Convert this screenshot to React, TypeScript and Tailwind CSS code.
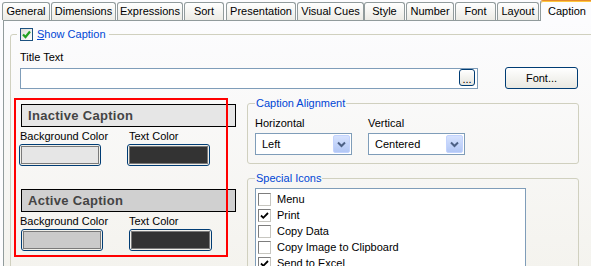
import React from 'react';

const tabs = [
  { label: 'General', cls: 'ml-[2px] w-[48px]' },
  { label: 'Dimensions', cls: 'ml-[1px] w-[65px]' },
  { label: 'Expressions', cls: 'ml-[1px] w-[66px]' },
  { label: 'Sort', cls: 'ml-[1px] w-[40px]' },
  { label: 'Presentation', cls: 'ml-[2px] w-[70px]' },
  { label: 'Visual Cues', cls: 'ml-[1px] w-[67px]' },
  { label: 'Style', cls: 'ml-0 w-[41px]' },
  { label: 'Number', cls: 'ml-[1px] w-[48px]' },
  { label: 'Font', cls: 'ml-[1px] w-[41px]' },
  { label: 'Layout', cls: 'ml-[1px] w-[42px]' },
];

const specialIcons = [
  { label: 'Menu', checked: false },
  { label: 'Print', checked: true },
  { label: 'Copy Data', checked: false },
  { label: 'Copy Image to Clipboard', checked: false },
  { label: 'Send to Excel', checked: true },
];

function XpCheck() {
  return (
    <span className="flex h-[13px] w-[13px] items-center justify-center border border-[#1c5180] bg-linear-to-br from-[#dcdcd7] to-white">
      <svg width="11" height="11" viewBox="0 0 11 11">
        <path d="M2 5.5 L4.5 8 L9 2.5" fill="none" stroke="#21a121" strokeWidth="2.2" />
      </svg>
    </span>
  );
}

function ListCheck({ checked }: { checked: boolean }) {
  return (
    <span className="flex h-[13px] w-[13px] shrink-0 items-center justify-center border border-[#c7c6c0] border-t-[#7d7d7d] border-l-[#7d7d7d] bg-white">
      {checked && (
        <svg width="9" height="9" viewBox="0 0 9 9">
          <path d="M1 4.5 L3.3 6.8 L8 2" fill="none" stroke="#000" strokeWidth="1.8" />
        </svg>
      )}
    </span>
  );
}

function ColorButton({ swatch, cls }: { swatch: string; cls: string }) {
  return (
    <div className={`h-[22px] rounded-[3px] border border-[#003c74] bg-[#f1f0ea] p-[1px] ${cls}`}>
      <div className={`h-full w-full border border-[#7a7a7a] ${swatch}`} />
    </div>
  );
}

function Combo({ value }: { value: string }) {
  return (
    <div className="flex h-[22px] w-[97px] items-center border border-[#7f9db9] bg-white p-[1px]">
      <span className="flex-1 pl-[5px]">{value}</span>
      <span className="flex h-full w-[17px] items-center justify-center rounded-[2px] border border-[#c3d3fd] bg-linear-to-b from-[#d6e2fe] to-[#b2c7f5]">
        <svg width="9" height="7" viewBox="0 0 9 7">
          <path d="M1 1.5 L4.5 5 L8 1.5" fill="none" stroke="#4d6185" strokeWidth="2" />
        </svg>
      </span>
    </div>
  );
}

function CaptionBlock({ title, header, bg, btnA, btnB }: { title: string; header: string; bg: string; btnA: string; btnB: string }) {
  return (
    <div>
      <div className={`ml-[1px] flex h-[23px] w-[215px] items-center border border-black pl-[6px] text-[13px] font-bold tracking-[0.3px] text-[#444] ${header}`}>
        {title}
      </div>
      <div className="mt-[3px] flex leading-[13px]">
        <span className="w-[109px]">Background Color</span>
        <span>Text Color</span>
      </div>
      <div className="mt-[1px] flex">
        <ColorButton swatch={bg} cls={btnA} />
        <ColorButton swatch="bg-[#333333]" cls={btnB} />
      </div>
    </div>
  );
}

export default function App() {
  return (
    <div className="relative h-[266px] w-[591px] overflow-hidden bg-[#fcfcfe] font-['Liberation_Sans',Arial,sans-serif] text-[11px] text-black">
      {/* tab strip */}
      <div className="flex h-[20px] items-end">
        {tabs.map((t) => (
          <div
            key={t.label}
            className={`flex h-[18px] shrink-0 items-center justify-center rounded-t-[3px] border border-b-0 border-[#919b9c] bg-linear-to-b from-white to-[#ecebe5] ${t.cls}`}
          >
            {t.label}
          </div>
        ))}
        <div className="relative z-10 -mb-px ml-[1px] flex h-[21px] w-[54px] shrink-0 items-start justify-center rounded-t-[3px] border border-b-0 border-[#919b9c] border-t-[#e68b2c] bg-[#fcfcfe] pt-[2px] shadow-[inset_0_1px_0_#ffc73c]">
          Caption
        </div>
      </div>

      {/* panel */}
      <div className="ml-[3px] h-[250px] w-[620px] border-t border-l border-[#919b9c] bg-linear-to-b from-[#fcfcfe] to-[#f4f3ee] pt-[7px] pl-[6px]">
        <fieldset className="h-[260px] rounded-[3px] border border-[#d0d0bf] p-0">
          <legend className="ml-[6px] px-[3px]">
            <span className="flex h-[13px] items-center gap-[4px] text-[#0046d5]">
              <XpCheck />
              <span><span className="underline">S</span>how Caption</span>
            </span>
          </legend>

          <div className="px-[9px] pt-[10px]">
            <div className="leading-[13px]">Title Text</div>
            <div className="mt-[4px] flex items-start">
              <div className="flex h-[21px] w-[458px] items-start justify-end border border-[#7f9db9] bg-white pr-[2px]">
                <button className="flex h-[17px] w-[16px] items-end justify-center rounded-[3px] border border-[#003c74] bg-linear-to-b from-white to-[#e6e5de] pb-[1px] leading-[10px]">
                  ...
                </button>
              </div>
              <button className="-mt-px ml-[27px] flex h-[22px] w-[73px] items-center justify-center rounded-[3px] border border-[#003c74] bg-linear-to-b from-white to-[#e9e8e1]">
                Font...
              </button>
            </div>

            <div className="mt-[8px] flex">
              {/* left column */}
              <div className="w-[227px] pt-[7px]">
                <CaptionBlock title="Inactive Caption" header="bg-[#e6e6e6]" bg="bg-[#e6e6e6]" btnA="-ml-px w-[82px]" btnB="ml-[26px] w-[83px]" />
                <div className="mt-[23px]">
                  <CaptionBlock title="Active Caption" header="bg-[#d0d0d0]" bg="bg-[#cacaca]" btnA="ml-[1px] w-[82px]" btnB="ml-[26px] w-[83px]" />
                </div>
              </div>

              {/* right column */}
              <div className="w-[332px]">
                <fieldset className="h-[67px] rounded-[3px] border border-[#d0d0bf] p-0">
                  <legend className="ml-[7px] px-[1px] leading-[13px] text-[#0046d5]">Caption Alignment</legend>
                  <div className="flex px-[7px] pt-[7px]">
                    <div className="w-[113px]">
                      <div className="leading-[13px]">Horizontal</div>
                      <div className="mt-[3px]">
                        <Combo value="Left" />
                      </div>
                    </div>
                    <div>
                      <div className="leading-[13px]">Vertical</div>
                      <div className="mt-[3px]">
                        <Combo value="Centered" />
                      </div>
                    </div>
                  </div>
                </fieldset>

                <fieldset className="mt-[8px] h-[120px] rounded-[3px] border border-[#d0d0bf] p-0">
                  <legend className="ml-[7px] px-[1px] leading-[13px] text-[#0046d5]">Special Icons</legend>
                  <div className="px-[7px] pt-[3px]">
                    <div className="h-[110px] w-[271px] border border-[#7f9db9] bg-white pt-[2px] pl-[2px]">
                      {specialIcons.map((s) => (
                        <div key={s.label} className="flex h-[16px] items-center gap-[6px]">
                          <ListCheck checked={s.checked} />
                          <span>{s.label}</span>
                        </div>
                      ))}
                    </div>
                  </div>
                </fieldset>
              </div>
            </div>
          </div>
        </fieldset>
      </div>

      {/* annotation */}
      <div className="absolute top-[98px] left-[14px] h-[159px] w-[214px] border-2 border-[#ff0000]" />
    </div>
  );
}
